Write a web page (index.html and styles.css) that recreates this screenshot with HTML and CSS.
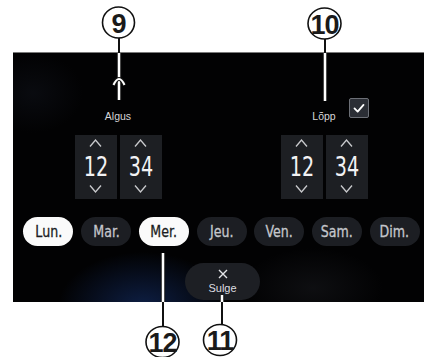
FILE: index.html
```html
<!DOCTYPE html>
<html lang="et">
<head>
<meta charset="utf-8">
<title>Ajastus</title>
<link rel="stylesheet" href="styles.css">
</head>
<body>
<div class="page">
  <main class="screen">
    <section class="panels">
      <div class="panel">
        <div class="label-row">
          <span class="label">Algus</span>
        </div>
        <div class="time">
          <div class="spin">
            <svg class="chev" viewBox="0 0 13 8"><polyline points="1,7.5 6.5,1 12,7.5"/></svg>
            <span class="num">12</span>
            <svg class="chev" viewBox="0 0 13 8"><polyline points="1,0.5 6.5,7 12,0.5"/></svg>
          </div>
          <div class="spin">
            <svg class="chev" viewBox="0 0 13 8"><polyline points="1,7.5 6.5,1 12,7.5"/></svg>
            <span class="num">34</span>
            <svg class="chev" viewBox="0 0 13 8"><polyline points="1,0.5 6.5,7 12,0.5"/></svg>
          </div>
        </div>
      </div>
      <div class="panel">
        <div class="label-row">
          <span class="label">Lõpp</span>
          <span class="check">
            <svg viewBox="0 0 20 20"><polyline points="5,10.5 8.5,14 15,6.5"/></svg>
          </span>
        </div>
        <div class="time">
          <div class="spin">
            <svg class="chev" viewBox="0 0 13 8"><polyline points="1,7.5 6.5,1 12,7.5"/></svg>
            <span class="num">12</span>
            <svg class="chev" viewBox="0 0 13 8"><polyline points="1,0.5 6.5,7 12,0.5"/></svg>
          </div>
          <div class="spin">
            <svg class="chev" viewBox="0 0 13 8"><polyline points="1,7.5 6.5,1 12,7.5"/></svg>
            <span class="num">34</span>
            <svg class="chev" viewBox="0 0 13 8"><polyline points="1,0.5 6.5,7 12,0.5"/></svg>
          </div>
        </div>
      </div>
    </section>
    <div class="days">
      <span class="day on"><span class="dtxt">Lun.</span></span>
      <span class="day"><span class="dtxt">Mar.</span></span>
      <span class="day on"><span class="dtxt">Mer.</span></span>
      <span class="day"><span class="dtxt">Jeu.</span></span>
      <span class="day"><span class="dtxt">Ven.</span></span>
      <span class="day"><span class="dtxt">Sam.</span></span>
      <span class="day"><span class="dtxt">Dim.</span></span>
    </div>
    <div class="actions">
      <button class="close">
        <svg class="x" viewBox="0 0 10 10"><path d="M1 1 L9 9 M9 1 L1 9"/></svg>
        <span>Sulge</span>
      </button>
    </div>
  </main>
  <svg class="callouts" viewBox="0 0 424 357">
    <!-- 9 -->
    <line class="lead-out" x1="119" y1="38" x2="119" y2="53"/>
    <line class="lead-edge" x1="119" y1="53" x2="119" y2="100"/>
    <line class="lead-in" x1="119" y1="53" x2="119" y2="100"/>
    <path class="arc-edge" d="M113.5 85 Q119 73 124.5 85"/>
    <path class="arc-in" d="M113.5 85 Q119 73 124.5 85"/>
    <ellipse class="ring" cx="118.5" cy="22.5" rx="16" ry="15.5"/>
    <text class="tag" x="118.5" y="32.5">9</text>
    <!-- 10 -->
    <line class="lead-out" x1="325" y1="39" x2="325" y2="53"/>
    <line class="lead-edge" x1="325" y1="53" x2="325" y2="101"/>
    <line class="lead-in" x1="325" y1="53" x2="325" y2="101"/>
    <ellipse class="ring" cx="324.5" cy="23.5" rx="16.5" ry="15.5"/>
    <text class="tag" x="324.5" y="33.5">10</text>
    <!-- 12 -->
    <line class="lead-edge" x1="163" y1="253" x2="163" y2="302"/>
    <line class="lead-in" x1="163" y1="253" x2="163" y2="302"/>
    <line class="lead-out" x1="163" y1="302" x2="163" y2="327"/>
    <ellipse class="ring" cx="162.5" cy="342" rx="16.5" ry="15.5"/>
    <text class="tag" x="162.5" y="352">12</text>
    <!-- 11 -->
    <line class="lead-edge" x1="222" y1="295" x2="222" y2="302"/>
    <line class="lead-in" x1="222" y1="295" x2="222" y2="302"/>
    <line class="lead-out" x1="222" y1="302" x2="222" y2="325"/>
    <ellipse class="ring" cx="220" cy="340" rx="16.5" ry="15.5"/>
    <text class="tag" x="220" y="350">11</text>
  </svg>
</div>
</body>
</html>
```

FILE: styles.css
```css
* { box-sizing: border-box; }

html, body {
  margin: 0;
  padding: 0;
  background: #ffffff;
}

.page {
  position: relative;
  width: 424px;
  height: 357px;
  overflow: hidden;
  background: #ffffff;
}

.screen {
  width: 417px;
  height: 250px;
  margin: 52px 0 0 13px;
  border-top: 1px solid #7a7a7a;
  overflow: hidden;
  background:
    radial-gradient(ellipse 85px 55px at 130px 254px, rgba(22, 50, 112, 0.6), rgba(0, 0, 0, 0) 100%),
    radial-gradient(ellipse 50px 40px at 20px 40px, rgba(20, 24, 34, 0.4), rgba(0, 0, 0, 0) 100%),
    radial-gradient(ellipse 70px 40px at 300px 235px, rgba(36, 38, 44, 0.35), rgba(0, 0, 0, 0) 100%),
    #020203;
  display: flex;
  flex-direction: column;
  font-family: "DejaVu Sans Condensed", "DejaVu Sans", sans-serif;
  color: #e8e8ea;
}

.panels {
  display: grid;
  grid-template-columns: 206px 206px;
  padding: 45px 0 0 2px;
}

.panel {
  display: flex;
  flex-direction: column;
  align-items: center;
}

.label-row {
  display: grid;
  grid-template-columns: 1fr auto 1fr;
  width: 100%;
  height: 24px;
}

.label {
  grid-column: 2;
  align-self: end;
  font-family: "Liberation Sans", Arial, sans-serif;
  font-size: 10.5px;
  line-height: 12px;
  color: #d6d6d8;
}

.check {
  grid-column: 3;
  justify-self: start;
  align-self: start;
  margin-left: 13px;
  width: 20px;
  height: 20px;
  border: 1.5px solid #6c6f76;
  border-radius: 2px;
  background: #2b2e35;
  display: flex;
}

.check svg {
  width: 100%;
  height: 100%;
  fill: none;
  stroke: #ffffff;
  stroke-width: 2;
  stroke-linecap: round;
  stroke-linejoin: round;
}

.time {
  display: flex;
  gap: 3px;
  margin-top: 13px;
}

.spin {
  width: 42px;
  height: 64px;
  background: #1d1f23;
  display: flex;
  flex-direction: column;
  align-items: center;
  padding-top: 4px;
}

.chev {
  width: 13px;
  height: 8px;
  fill: none;
  stroke: #c9cacd;
  stroke-width: 1.3;
}

.num {
  display: inline-block;
  margin: 7px 0 5px;
  font-size: 26px;
  line-height: 26px;
  color: #f2f2f4;
  transform: scaleX(0.82);
}

.days {
  display: flex;
  justify-content: center;
  gap: 7.7px;
  margin-top: 18px;
}

.day {
  width: 50px;
  height: 29px;
  border-radius: 15px;
  background: #1c1e23;
  color: #c4c6cb;
  font-size: 16.5px;
  display: flex;
  align-items: center;
  justify-content: center;
}

.dtxt {
  display: inline-block;
  transform: scaleX(0.85);
  -webkit-text-stroke: 0.3px currentColor;
}

.day.on {
  background: #fafafa;
  color: #1b1d22;
}

.actions {
  display: flex;
  justify-content: center;
  padding-left: 2px;
  margin-top: 17px;
}

.close {
  width: 75px;
  height: 37px;
  border: 0;
  border-radius: 19px;
  background: #1d1f24;
  color: #dcdde0;
  display: flex;
  flex-direction: column;
  align-items: center;
  padding: 6px 0 0;
  font-family: "Liberation Sans", Arial, sans-serif;
  font-size: 11px;
  line-height: 13px;
}

.x {
  width: 10px;
  height: 10px;
  fill: none;
  stroke: #e4e5e8;
  stroke-width: 1.4;
  margin-bottom: 3px;
}

.callouts {
  position: absolute;
  left: 0;
  top: 0;
  width: 424px;
  height: 357px;
  pointer-events: none;
}

.lead-out {
  stroke: #111111;
  stroke-width: 2;
}

.lead-edge {
  stroke: #111111;
  stroke-width: 4.5;
}

.lead-in {
  stroke: #ffffff;
  stroke-width: 2.5;
}

.arc-edge {
  fill: none;
  stroke: #111111;
  stroke-width: 4;
}

.arc-in {
  fill: none;
  stroke: #ffffff;
  stroke-width: 2;
}

.ring {
  fill: #ffffff;
  stroke: #111111;
  stroke-width: 1.6;
}

.tag {
  font-family: "Liberation Sans", Arial, sans-serif;
  font-weight: bold;
  font-size: 27px;
  letter-spacing: -1px;
  text-anchor: middle;
  fill: #1a1a1a;
}
```
